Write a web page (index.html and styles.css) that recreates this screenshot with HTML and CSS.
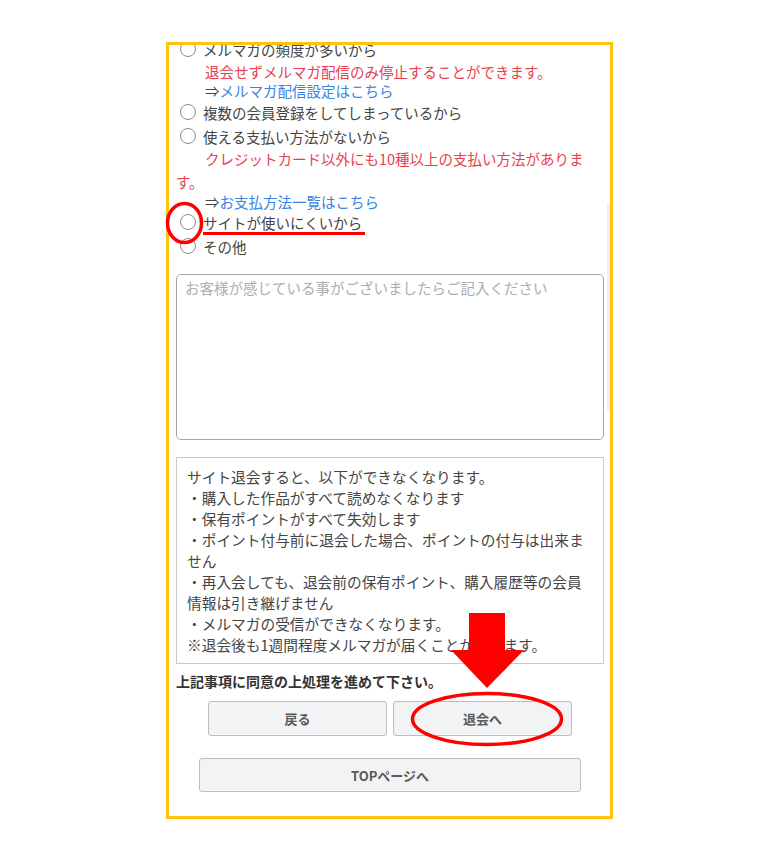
FILE: index.html
```html
<!DOCTYPE html>
<html lang="ja">
<head>
    <meta charset="UTF-8">
    <meta name="viewport" content="width=device-width, initial-scale=1">
    <title>退会手続き</title>
    <link rel="stylesheet" href="styles.css">
</head>
<body>

    <div class="frame">
        <div class="scroll-track"></div>
        <div class="content">
            <form id="leaveForm">
                <label class="opt opt-first"><input type="radio" name="reason"><span>メルマガの頻度が多いから</span></label>
                <p class="note note-one">退会せずメルマガ配信のみ停止することができます。</p>
                <p class="link-line">⇒<a href="#">メルマガ配信設定はこちら</a></p>
                <label class="opt"><input type="radio" name="reason"><span>複数の会員登録をしてしまっているから</span></label>
                <label class="opt"><input type="radio" name="reason"><span>使える支払い方法がないから</span></label>
                <p class="note note-two">クレジットカード以外にも10種以上の支払い方法があります。</p>
                <p class="link-line link-short">⇒<a href="#">お支払方法一覧はこちら</a></p>
                <label class="opt"><input type="radio" name="reason"><span>サイトが使いにくいから</span></label>
                <label class="opt"><input type="radio" name="reason"><span>その他</span></label>

                <textarea class="comment" placeholder="お客様が感じている事がございましたらご記入ください"></textarea>

                <div class="caution">
                    <p>サイト退会すると、以下ができなくなります。</p>
                    <p>・購入した作品がすべて読めなくなります</p>
                    <p>・保有ポイントがすべて失効します</p>
                    <p>・ポイント付与前に退会した場合、ポイントの付与は出来ま<br>せん</p>
                    <p>・再入会しても、退会前の保有ポイント、購入履歴等の会員<br>情報は引き継げません</p>
                    <p>・メルマガの受信ができなくなります。</p>
                    <p>※退会後も1週間程度メルマガが届くことがあります。</p>
                </div>

                <p class="agree">上記事項に同意の上処理を進めて下さい。</p>

                <div class="button-row">
                    <button type="button" class="btn">戻る</button>
                    <button type="button" class="btn">退会へ</button>
                </div>
                <div class="button-row">
                    <button type="button" class="btn btn-wide">TOPページへ</button>
                </div>
            </form>
        </div>
    </div>

    <!-- red marks drawn over the screenshot -->
    <svg class="marks" width="780" height="853" viewBox="0 0 780 853">
        <ellipse cx="184.5" cy="223" rx="17" ry="19.5" fill="none" stroke="#ff0000" stroke-width="3.5"/>
        <line x1="203" y1="233.5" x2="365" y2="233.5" stroke="#ff0000" stroke-width="3"/>
        <polygon points="469,613 505,613 505,650 524,650 487,688 451,650 469,650" fill="#ff0000"/>
        <ellipse cx="487" cy="719" rx="74.5" ry="25.5" fill="none" stroke="#ff0000" stroke-width="3.5"/>
    </svg>

</body>
</html>
```

FILE: styles.css
```css
body {
    margin: 0;
    background-color: #fff;
    font-family: "Noto Sans CJK JP", "Noto Sans", sans-serif;
    color: #454545;
}
.frame {
    position: relative;
    box-sizing: border-box;
    width: 447px;
    height: 777px;
    margin: 42px 0 0 166px;
    border: 3px solid #ffc20e;
    overflow: hidden;
}
.scroll-track {
    position: absolute;
    left: 438px;
    top: 158px;
    width: 4px;
    height: 208px;
    background-color: #efefef;
}
.content {
    padding: 0 6px 0 7px;
    margin-top: -8px;
    font-size: 14.5px;
}
p {
    margin: 0;
}
.opt {
    display: flex;
    align-items: center;
    height: 24px;
    gap: 7px;
}
.opt input {
    appearance: none;
    -webkit-appearance: none;
    width: 16px;
    height: 16px;
    margin: 0 0 0 4px;
    border: 1.5px solid #8c8c8c;
    border-radius: 50%;
    background: #fff;
}
.note {
    color: #e8404e;
    text-indent: 29px;
}
.note-one {
    line-height: 21px;
}
.note-two {
    line-height: 22.5px;
}
.link-line {
    padding-left: 29px;
    line-height: 18px;
    color: #444;
}
.link-short {
    line-height: 17px;
}
.link-line a {
    color: #3a84e4;
    text-decoration: none;
}
.comment {
    display: block;
    box-sizing: border-box;
    width: 428px;
    height: 166px;
    margin-top: 16px;
    padding: 2px 8px;
    border: 1.5px solid #a6a6a6;
    border-radius: 5px;
    font-family: inherit;
    font-size: 14.5px;
    resize: none;
}
.comment::placeholder {
    color: #adadad;
}
.caution {
    box-sizing: border-box;
    width: 428px;
    margin-top: 17px;
    padding: 8px 10px 8px 10px;
    border: 1px solid #c9c9c9;
    font-size: 14.7px;
    line-height: 21px;
}
.agree {
    margin-top: 6px;
    font-size: 14px;
    font-weight: bold;
    color: #333;
    line-height: 22px;
}
.button-row {
    display: flex;
    justify-content: center;
    gap: 6px;
    width: 428px;
    margin-top: 9px;
}
.button-row + .button-row {
    margin-top: 22px;
}
.btn {
    box-sizing: border-box;
    width: 179px;
    height: 35px;
    background-color: #f2f3f5;
    border: 1px solid #bdbdbd;
    border-radius: 3px;
    font-family: inherit;
    font-size: 13px;
    font-weight: bold;
    color: #5a5a5a;
}
.btn-wide {
    width: 382px;
    height: 34px;
}
.marks {
    position: absolute;
    left: 0;
    top: 0;
    pointer-events: none;
}
```
